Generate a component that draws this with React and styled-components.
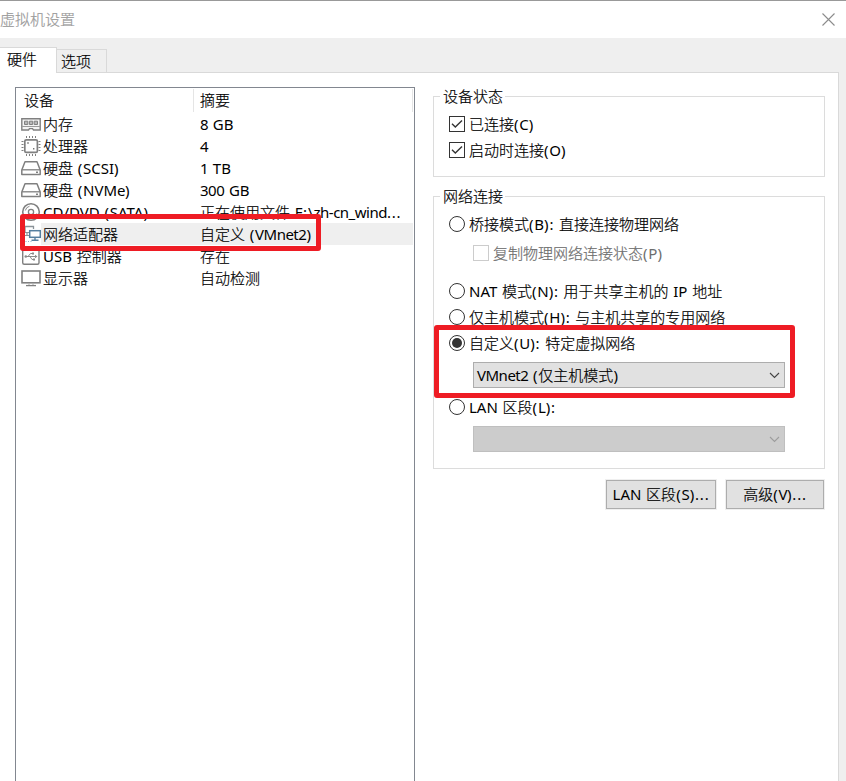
import styled, { createGlobalStyle } from "styled-components";

const devices = [
	{ icon: <MemoryIcon />, name: "内存", summary: "8 GB" },
	{ icon: <CpuIcon />, name: "处理器", summary: "4" },
	{ icon: <DiskIcon />, name: "硬盘 (SCSI)", summary: "1 TB" },
	{ icon: <DiskIcon />, name: "硬盘 (NVMe)", summary: "300 GB" },
	{ icon: <DiscIcon />, name: "CD/DVD (SATA)", summary: "正在使用文件 E:\\zh-cn_wind..." },
	{ icon: <NetworkIcon />, name: "网络适配器", summary: "自定义 (VMnet2)", selected: true },
	{ icon: <UsbIcon />, name: "USB 控制器", summary: "存在" },
	{ icon: <DisplayIcon />, name: "显示器", summary: "自动检测" },
];

export default function App() {
	return (
		<Window>
			<GlobalStyle />
			<TitleBar>
				<Title>虚拟机设置</Title>
				<CloseIcon />
			</TitleBar>
			<TabBar>
				<ActiveTab>硬件</ActiveTab>
				<Tab>选项</Tab>
				<TabFiller />
			</TabBar>
			<Page>
				<DeviceList>
					<ListHeader>
						<HeaderName>设备</HeaderName>
						<HeaderSummary>摘要</HeaderSummary>
					</ListHeader>
					{devices.map((device) => (
						<DeviceRow key={device.name}>
							{device.icon}
							<DeviceCells $selected={device.selected}>
								<DeviceName>{mixed(device.name)}</DeviceName>
								<DeviceSummary>{mixed(device.summary)}</DeviceSummary>
							</DeviceCells>
						</DeviceRow>
					))}
				</DeviceList>

				<Details>
					<Group $height={90}>
						<Legend>设备状态</Legend>
						<Check label="已连接(C)" checked />
						<Check label="启动时连接(O)" checked />
					</Group>

					<Group $height={282}>
						<Legend>网络连接</Legend>
						<Radio label="桥接模式(B): 直接连接物理网络" />
						<Nested $top={3} $bottom={12}>
							<Check label="复制物理网络连接状态(P)" disabled />
						</Nested>
						<Radio label="NAT 模式(N): 用于共享主机的 IP 地址" />
						<Radio label="仅主机模式(H): 与主机共享的专用网络" />
						<Radio label="自定义(U): 特定虚拟网络" checked />
						<Nested $top={6} $bottom={6}>
							<Select>
								<span>{mixed("VMnet2 (仅主机模式)")}</span>
								<Chevron color="#444444" />
							</Select>
						</Nested>
						<Radio label="LAN 区段(L):" />
						<Nested $top={6} $bottom={0}>
							<Select $disabled>
								<span />
								<Chevron color="#9d9d9d" />
							</Select>
						</Nested>
					</Group>

					<ButtonRow>
						<Button $width={110}>{mixed("LAN 区段(S)...")}</Button>
						<Button $width={98}>{mixed("高级(V)...")}</Button>
					</ButtonRow>
				</Details>
			</Page>

			<Highlight $left={20} $top={214} $width={301} $height={37} />
			<Highlight $left={434} $top={325} $width={361} $height={73} />
		</Window>
	);
}

// latin runs get their own spacing, chinese keeps the full em grid
function mixed(text) {
	return text
		.split(/([():. ]+|[VMa-z0-9_-]+|[A-Z/\\]+)/)
		.filter(Boolean)
		.map((part, i) => {
			if (/^[():. ]/.test(part)) return <Latin key={i} $spacing={0.8}>{part}</Latin>;
			if (/^[VMa-z0-9_-]/.test(part)) return <Latin key={i} $spacing={-0.5}>{part}</Latin>;
			if (/^[A-Z/\\]/.test(part)) return <Latin key={i} $spacing={0}>{part}</Latin>;
			return part;
		});
}

function Check({ label, checked, disabled }) {
	return (
		<Option $disabled={disabled}>
			<CheckBox $disabled={disabled}>
				{checked && (
					<svg width="14" height="14" viewBox="0 0 14 14">
						<path d="M2 6.8L5.3 10L12 3.4" fill="none" stroke="#333333" strokeWidth="1.4" />
					</svg>
				)}
			</CheckBox>
			<span>{mixed(label)}</span>
		</Option>
	);
}

function Radio({ label, checked }) {
	return (
		<Option>
			<RadioCircle>{checked && <RadioDot />}</RadioCircle>
			<span>{mixed(label)}</span>
		</Option>
	);
}

function Chevron({ color }) {
	return (
		<svg width="11" height="7" viewBox="0 0 11 7">
			<path d="M1 1L5.5 5.5L10 1" fill="none" stroke={color} strokeWidth="1.1" />
		</svg>
	);
}

function CloseIcon() {
	return (
		<svg width="13" height="13" viewBox="0 0 13 13">
			<path d="M0.5 0.5L12.5 12.5M12.5 0.5L0.5 12.5" stroke="#8c8c8c" strokeWidth="1.1" />
		</svg>
	);
}

function MemoryIcon() {
	return (
		<IconSvg viewBox="0 0 20 22">
			<path d="M0.8 5.8H19.2V17H12.5L11.5 15.6H8.5L7.5 17H0.8Z" fill="#f4f4f4" stroke="#808080" strokeWidth="1.4" />
			<path d="M1 13.5H19" stroke="#9a9a9a" />
			<path d="M3.5 8.2H6.8V11.5H3.5ZM8.4 8.2H11.7V11.5H8.4ZM13.2 8.2H16.5V11.5H13.2Z" fill="#b8b8b8" stroke="#808080" />
		</IconSvg>
	);
}

function CpuIcon() {
	return (
		<IconSvg viewBox="0 0 20 22">
			<rect x="3.8" y="4.8" width="12.6" height="12.6" rx="1.5" fill="#ffffff" stroke="#808080" strokeWidth="1.7" />
			<path
				d="M5.5 1V3M8.5 1V3M11.5 1V3M14.5 1V3M5.5 19V21M8.5 19V21M11.5 19V21M14.5 19V21M0.5 6.5H2.5M0.5 9.5H2.5M0.5 12.5H2.5M0.5 15.5H2.5M17.5 6.5H19.5M17.5 9.5H19.5M17.5 12.5H19.5M17.5 15.5H19.5"
				stroke="#808080"
			/>
			<path d="M6.2 7.2H7.8V8.8H6.2ZM12 13H13.4V14.4H12Z" fill="#777777" />
		</IconSvg>
	);
}

function DiskIcon() {
	return (
		<IconSvg viewBox="0 0 20 22">
			<path d="M4 4.8H16L19.2 13V17.6H0.8V13Z" fill="#ffffff" stroke="#808080" strokeWidth="1.5" strokeLinejoin="round" />
			<path d="M1 12.8H19" stroke="#808080" strokeWidth="1.3" />
			<rect x="15" y="14.5" width="2" height="1.5" fill="#808080" />
		</IconSvg>
	);
}

function DiscIcon() {
	return (
		<IconSvg viewBox="0 0 20 22">
			<circle cx="10" cy="11" r="8.3" fill="#ffffff" stroke="#808080" strokeWidth="1.6" />
			<circle cx="10" cy="11" r="2.6" fill="none" stroke="#808080" strokeWidth="1.3" />
			<path d="M4.3 9.5A6 6 0 0 1 8.5 5.2M15.7 12.5A6 6 0 0 1 11.5 16.8" fill="none" stroke="#8a8a8a" />
		</IconSvg>
	);
}

function NetworkIcon() {
	return (
		<IconSvg viewBox="0 0 20 22">
			<path d="M4 9.5V3.5H12.5V6" fill="none" stroke="#8a9298" strokeWidth="1.3" />
			<path d="M4 9.5H8M6 9.5V12.5M3.5 12.5H8" fill="none" stroke="#8a9298" strokeWidth="1.2" />
			<rect x="8.7" y="7.7" width="10.6" height="6.6" fill="#ffffff" stroke="#557f9f" strokeWidth="1.5" />
			<path d="M14 14.5V17M10.5 17.2H17.5" stroke="#557f9f" strokeWidth="1.4" />
			<path d="M2 18.5H11" stroke="#8fb0c8" strokeDasharray="1 1.5" />
		</IconSvg>
	);
}

function UsbIcon() {
	return (
		<IconSvg viewBox="0 0 20 22">
			<rect x="1.7" y="3" width="16.3" height="16.3" rx="1.5" fill="#ffffff" stroke="#808080" strokeWidth="1.4" />
			<path d="M4.5 11.5H15M7 11.5L9.5 8.5H11.5M9 11.5L11 14.5H12.5" fill="none" stroke="#8a8a8a" />
			<circle cx="4.8" cy="11.5" r="1.3" fill="#8a8a8a" />
			<path d="M14 9.8L16.5 11.5L14 13.2ZM11 7.5H13V9.5H11ZM12 13.5H14V15.5H12Z" fill="#8a8a8a" />
		</IconSvg>
	);
}

function DisplayIcon() {
	return (
		<IconSvg viewBox="0 0 20 22">
			<rect x="1" y="4" width="18" height="11.8" fill="#ffffff" stroke="#808080" strokeWidth="1.6" />
			<path d="M8 16.5V18M12 16.5V18" stroke="#b0b0b0" />
			<path d="M5 18.6H15" stroke="#808080" strokeWidth="1.3" />
		</IconSvg>
	);
}

const GlobalStyle = createGlobalStyle`
	* {
		box-sizing: border-box;
	}

	body {
		margin: 0;
		overflow: hidden;
		background: #ffffff;
	}
`;

const Window = styled.div`
	position: relative;
	width: 846px;
	height: 781px;
	overflow: hidden;
	display: flex;
	flex-direction: column;
	background: #efefef;
	border-top: 1px solid #999999;
	font-family: "Noto Sans", "Noto Sans CJK SC", sans-serif;
	font-size: 15px;
	font-weight: 300;
	line-height: 20px;
	color: #000000;
	white-space: pre;
	-webkit-text-stroke: 0.2px currentColor;
`;

const TitleBar = styled.header`
	height: 37px;
	flex-shrink: 0;
	display: flex;
	align-items: center;
	justify-content: space-between;
	padding-right: 11px;
	background: #ffffff;
`;

const Title = styled.h1`
	margin: 0;
	padding-bottom: 2px;
	font-size: 15px;
	font-weight: 300;
	color: #999999;
`;

const TabBar = styled.nav`
	height: 35px;
	flex-shrink: 0;
	display: flex;
	align-items: flex-end;
`;

const Tab = styled.div`
	width: 50px;
	height: 24px;
	padding: 1px 0 0 4px;
	border: 1px solid #d9d9d9;
	border-left: none;
	background: #efefef;
`;

const ActiveTab = styled(Tab)`
	width: 57px;
	height: 26px;
	padding: 1px 0 0 7px;
	border-bottom: none;
	background: #ffffff;
`;

const TabFiller = styled.div`
	width: 732px;
	height: 1px;
	background: #d9d9d9;
`;

const Page = styled.main`
	width: 839px;
	flex: 1;
	display: flex;
	gap: 18px;
	padding: 14px 13px 0 15px;
	background: #ffffff;
	border-right: 1px solid #d9d9d9;
`;

const DeviceList = styled.section`
	width: 400px;
	border: 1px solid #828790;
	border-bottom: none;
`;

const ListHeader = styled.div`
	height: 25px;
	display: flex;
	align-items: center;
	padding-right: 1px;
`;

const HeaderName = styled.div`
	width: 178px;
	height: 23px;
	padding: 1px 0 0 8px;
	border-right: 1px solid #e5e5e5;
`;

const HeaderSummary = styled.div`
	flex: 1;
	height: 23px;
	padding: 1px 0 0 6px;
	border-right: 1px solid #e5e5e5;
`;

const DeviceRow = styled.div`
	height: 22px;
	display: flex;
	padding: 0 1px 0 5px;
`;

const IconSvg = styled.svg`
	width: 20px;
	height: 22px;
	flex-shrink: 0;
`;

const DeviceCells = styled.div`
	flex: 1;
	display: flex;
	align-items: center;
	background: ${({ $selected }) => ($selected ? "#efefef" : "transparent")};
`;

const DeviceName = styled.div`
	width: 153px;
	padding-left: 2px;
`;

const DeviceSummary = styled.div`
	padding-left: 6px;
`;

const Details = styled.section`
	width: 392px;
	display: flex;
	flex-direction: column;
	gap: 10px;
`;

const Group = styled.fieldset`
	height: ${({ $height }) => $height}px;
	min-width: 0;
	margin: 0;
	padding: 5px 0 0 15px;
	border: 1px solid #dcdcdc;
`;

const Legend = styled.legend`
	height: 19px;
	margin-left: -9px;
	padding: 0 2px 0 3px;
	line-height: 19px;
`;

const Option = styled.div`
	height: 26px;
	display: flex;
	align-items: center;
	gap: 4px;
	color: ${({ $disabled }) => ($disabled ? "#6d6d6d" : "#000000")};
`;

const CheckBox = styled.span`
	width: 16px;
	height: 16px;
	display: flex;
	border: 1px solid ${({ $disabled }) => ($disabled ? "#cccccc" : "#333333")};
	background: #ffffff;
`;

const RadioCircle = styled.span`
	width: 16px;
	height: 16px;
	display: flex;
	align-items: center;
	justify-content: center;
	border: 1px solid #333333;
	border-radius: 50%;
	background: #ffffff;
`;

const RadioDot = styled.span`
	width: 10px;
	height: 10px;
	border-radius: 50%;
	background: #333333;
`;

const Nested = styled.div`
	margin: ${({ $top, $bottom }) => `${$top}px 0 ${$bottom}px 24px`};
`;

const Select = styled.div`
	width: 312px;
	height: 26px;
	display: flex;
	align-items: center;
	justify-content: space-between;
	padding: 0 4px 0 3px;
	border: 1px solid ${({ $disabled }) => ($disabled ? "#bfbfbf" : "#adadad")};
	background: ${({ $disabled }) => ($disabled ? "#cccccc" : "#e1e1e1")};
`;

const ButtonRow = styled.div`
	display: flex;
	justify-content: flex-end;
	gap: 10px;
	padding: 1px 1px 0 0;
`;

const Button = styled.button`
	width: ${({ $width }) => $width}px;
	height: 29px;
	padding: 0 0 2px;
	border: 1px solid #adadad;
	background: #e1e1e1;
	box-shadow: 0 0 0 1px #efefef;
	font: inherit;
	color: #000000;
	white-space: pre;
`;

const Latin = styled.span`
	font-weight: 400;
	letter-spacing: ${({ $spacing }) => $spacing}px;
	-webkit-text-stroke: 0;
`;

const Highlight = styled.div`
	position: absolute;
	left: ${({ $left }) => $left}px;
	top: ${({ $top }) => $top - 1}px;
	width: ${({ $width }) => $width}px;
	height: ${({ $height }) => $height}px;
	border: 5px solid #ee1c24;
	border-radius: 3px;
`;
